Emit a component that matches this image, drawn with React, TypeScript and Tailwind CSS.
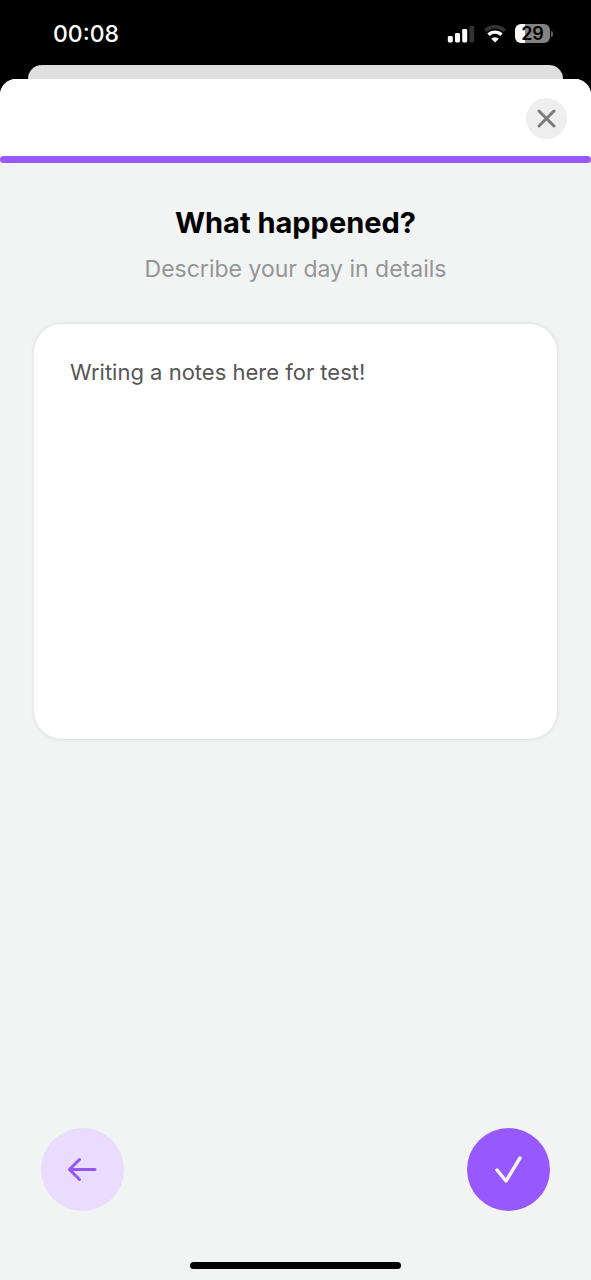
import { useState } from "react";

function StatusBar() {
  return (
    <div className="flex h-[65px] items-center justify-between pr-[38px] pl-[53px] text-white">
      <time className="pt-0.5 text-[23px] leading-7 font-medium">00:08</time>
      <div className="flex items-center gap-2 pt-0.5">
        <svg className="h-[18px] w-[28px]" viewBox="0 0 28 18" fill="currentColor" role="img" aria-label="Signal">
          <rect x="0.8" y="11" width="5" height="6.500" rx="1.4" />
          <rect x="8" y="8" width="5" height="9.500" rx="1.4" />
          <rect x="15.2" y="4" width="5" height="13.500" rx="1.4" />
          <rect x="22.4" y="1" width="4.8" height="16.500" rx="1.4" fill="#333333" />
        </svg>
        <svg className="h-[18px] w-[24px]" viewBox="0 0 24 18" fill="none" role="img" aria-label="Wi-Fi">
          <path d="M2.200 5.800a14 14 0 0 1 19.600 0" stroke="#333333" strokeWidth="3.4" />
          <path d="M5.500 9.800a9.200 9.200 0 0 1 13 0" stroke="#ffffff" strokeWidth="3.4" />
          <path d="M12 17.500 8.200 13.800a5.400 5.400 0 0 1 7.600 0Z" fill="#ffffff" />
        </svg>
        <div className="flex items-center gap-px">
          <div className="flex h-[19px] w-[35px] items-center justify-center rounded-md bg-linear-to-r from-white from-30% to-[#838383] to-30% text-[18px] leading-5 font-semibold text-black">
            29
          </div>
          <div className="h-[6px] w-[2px] rounded-r-full bg-[#606060]" />
        </div>
      </div>
    </div>
  );
}

export default function App() {
  const [note, setNote] = useState("Writing a notes here for test!");

  return (
    <div className="flex min-h-screen flex-col bg-black font-['Inter','Liberation_Sans',sans-serif]">
      <StatusBar />
      <div className="mx-7 h-[14px] rounded-t-[14px] bg-[#dfdfdf]" />
      <main className="flex grow flex-col rounded-t-[16px] bg-[#f2f3f3]">
        <header className="flex h-[77px] items-center justify-end rounded-t-[16px] bg-white px-6 pt-0.5">
          <button
            type="button"
            aria-label="Close"
            className="flex size-[41px] items-center justify-center rounded-full bg-[#eeeeee] text-[#7c7c7c]"
          >
            <svg className="size-[19px]" viewBox="0 0 19 19" fill="none" stroke="currentColor" strokeWidth="3" strokeLinecap="round">
              <path d="M2 2l15 15M17 2L2 17" />
            </svg>
          </button>
        </header>
        <div className="bg-linear-to-b from-white from-50% to-[#f2f3f3] to-50%">
          <div className="h-[7px] rounded-full bg-[#9759fd]" />
        </div>

        <div className="flex grow flex-col px-[34px] pt-10">
          <h1 className="text-center text-[29px] leading-10 font-bold text-black">What happened?</h1>
          <p id="hint" className="mt-2 text-center text-[23px] leading-9 text-[#949695]">
            Describe your day in details
          </p>
          <textarea
            aria-label="What happened?"
            aria-describedby="hint"
            value={note}
            onChange={(event) => setNote(event.target.value)}
            className="mt-[37px] h-[415px] w-full resize-none rounded-[28px] bg-white px-9 py-8 text-[22px] leading-8 text-[#565656] shadow-[0_0_4px_rgba(0,0,0,0.12)] outline-none"
          />
        </div>

        <nav className="flex items-center justify-between px-[41px] pb-[51px]">
          <button
            type="button"
            aria-label="Back"
            className="flex size-[83px] items-center justify-center rounded-full bg-[#e9dcff] text-[#9557f3]"
          >
            <svg className="size-8" viewBox="0 0 32 32" fill="none" stroke="currentColor" strokeWidth="3" strokeLinecap="round" strokeLinejoin="round">
              <path d="M28 15.500H2.500M12.500 5.500L2.500 15.500l10 10" />
            </svg>
          </button>
          <button
            type="button"
            aria-label="Save"
            className="flex size-[83px] items-center justify-center rounded-full bg-[#9759fd] text-[#fdf6ff]"
          >
            <svg className="size-8" viewBox="0 0 32 32" fill="none" stroke="currentColor" strokeWidth="3.4" strokeLinecap="round" strokeLinejoin="round">
              <path d="M4 16l9 11L27 4" />
            </svg>
          </button>
        </nav>
        <div className="mx-auto mb-[11px] h-[7px] w-[211px] rounded-full bg-black" />
      </main>
    </div>
  );
}
